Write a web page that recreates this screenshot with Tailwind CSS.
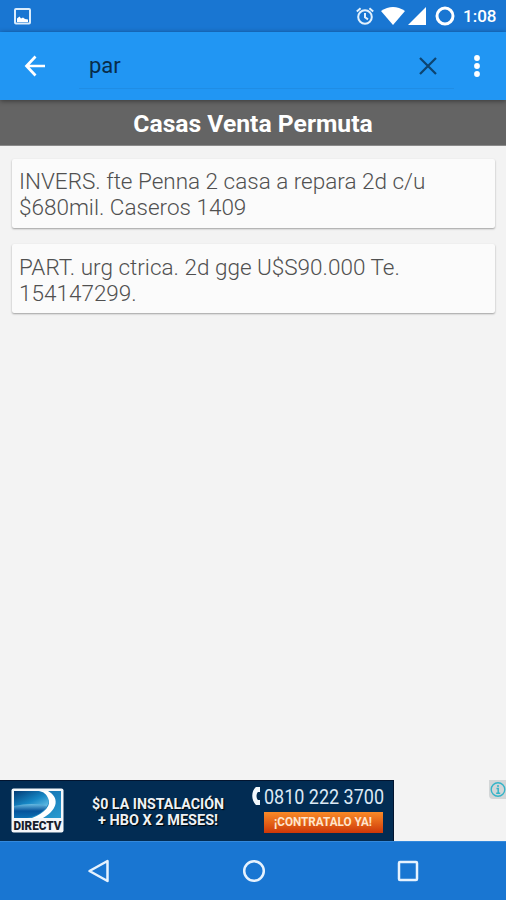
<!DOCTYPE html>
<html lang="es">
<head>
<meta charset="utf-8">
<title>Casas Venta Permuta</title>
<script src="https://cdn.jsdelivr.net/npm/@tailwindcss/browser@4"></script>
</head>
<body class="w-[506px] h-[900px] overflow-hidden bg-[#f3f3f3] font-['Roboto',sans-serif]">
<div class="flex flex-col h-[900px]">
  <!-- Status bar -->
  <div class="h-8 shrink-0 bg-[#1976d2] flex items-center justify-between pl-[14px] pr-[9px] text-white">
    <svg class="w-[17px] h-[17px]" viewBox="0 0 17 17"><rect x="1" y="1" width="15" height="14.500" rx="1" fill="none" stroke="#d9ecfc" stroke-width="2"/><path d="M3 14V10.500l2.500-2 1.500 2 2-1 2 1.500 3 .5V14z" fill="#fff"/></svg>
    <div class="flex items-center">
      <svg class="w-[18px] h-[18px]" viewBox="0 0 18 18" fill="none" stroke="#e3f1fd" stroke-width="2"><circle cx="9" cy="10" r="6.800"/><path d="M9 6v4.300l3 2M.8 4.500 4.600 1.300M17.200 4.500 13.400 1.300" stroke-width="2"/></svg>
      <svg class="w-6 h-[18px] ml-[7px]" viewBox="0 0 24 18"><path d="M0 4Q12-4 24 4L12 18z" fill="#fff"/></svg>
      <svg class="w-[18px] h-[18px] ml-[3px]" viewBox="0 0 18 18"><path d="M18 0V18H0z" fill="#fff"/></svg>
      <svg class="w-5 h-5 ml-[9px]" viewBox="0 0 20 20"><circle cx="10" cy="10" r="8" fill="none" stroke="#fff" stroke-width="3"/></svg>
      <span class="ml-[8px] w-[34px] text-[17px] font-medium leading-8 whitespace-nowrap">1:08</span>
    </div>
  </div>
  <!-- Search toolbar -->
  <div class="h-[68px] shrink-0 bg-[#2196f3] flex items-center relative z-10 shadow-[0_1px_5px_rgba(0,0,0,0.45)]">
    <svg class="w-[22px] h-[22px] ml-6" viewBox="0 0 22 22" fill="none" stroke="#fff" stroke-width="2.700"><path d="M21 11H3M11.500 1.500 2.500 11l9 9.500"/></svg>
    <div class="ml-[33px] w-[375px] h-[54px] mt-[-8px] flex items-center justify-between pl-[10px] pr-[17px] pt-[8px] border-b border-[#1f8de5]">
      <span class="text-[22px] leading-[28px] text-[#082c49]">par</span>
      <svg class="w-[18px] h-[18px]" viewBox="0 0 18 18" fill="none" stroke="#0d4470" stroke-width="2.200"><path d="m1 1 16 16M17 1 1 17"/></svg>
    </div>
    <svg class="w-[6px] h-[22px] ml-5" viewBox="0 0 6 22" fill="#fff"><circle cx="3" cy="3" r="2.900"/><circle cx="3" cy="11" r="2.900"/><circle cx="3" cy="19" r="2.900"/></svg>
  </div>
  <!-- Section title -->
  <h1 class="h-[46px] shrink-0 bg-[#646464] border-b border-[#8a8a8a] text-white font-bold text-[24.700px] leading-[48px] text-center">Casas Venta Permuta</h1>
  <!-- Listings -->
  <main class="flex-1 flex flex-col gap-4 pt-[13px] pl-3 pr-[11px] text-[22.500px] leading-[26px] text-[#505050] font-light">
    <div class="h-[69px] bg-[#fbfbfb] pl-[7px] pt-[9px] rounded-[2px] shadow-[0_1px_2px_rgba(0,0,0,0.35)]">INVERS. fte Penna 2 casa a repara 2d c/u<br>$680mil. Caseros 1409</div>
    <div class="h-[69px] bg-[#fbfbfb] pl-[7px] pt-[10px] rounded-[2px] shadow-[0_1px_2px_rgba(0,0,0,0.35)]">PART. urg ctrica. 2d gge U$S90.000 Te.<br>154147299.</div>
  </main>
  <!-- Ad banner -->
  <div class="h-[61px] shrink-0 flex justify-between items-start">
    <div class="w-[394px] h-[61px] bg-[#022c53] border-t border-r border-[#02142f] flex">
      <svg class="w-[54px] h-[45px] ml-[11px] mt-[7px]" viewBox="0 0 54 45">
        <defs>
          <linearGradient id="sky" x1="0" y1="0" x2=".6" y2="1"><stop offset="0" stop-color="#033b75"/><stop offset=".5" stop-color="#1687c5"/><stop offset="1" stop-color="#8ddaf5"/></linearGradient>
          <linearGradient id="deep" x1="0" y1="0" x2="0" y2="1"><stop offset="0" stop-color="#6abce2"/><stop offset=".5" stop-color="#06539b"/><stop offset="1" stop-color="#0b6eb2"/></linearGradient>
          <linearGradient id="edge" x1="0" y1="0" x2="1" y2="1"><stop offset="0" stop-color="#0a62a6"/><stop offset="1" stop-color="#2a9bd0"/></linearGradient>
        </defs>
        <rect x=".5" y=".5" width="52" height="44" rx="2" fill="#f4f7fa"/>
        <path d="M3 3H50V30H3z" fill="url(#edge)"/>
        <path d="M3 3H25C36 4 41 12 36 18 30 26 17 29 3 30z" fill="url(#sky)"/>
        <path d="M3 18Q22 14 36 18 31 27 16 30H3z" fill="url(#deep)"/>
        <path d="M28 3H37C48 9 48 21 32 30H21C34 25 41 17 37 10 35 6 33 4 28 3z" fill="#fff"/>
        <text x="2.500" y="42" textLength="48" lengthAdjust="spacingAndGlyphs" font-family="Roboto, sans-serif" font-size="12" font-weight="900" fill="#17202c">DIRECTV</text>
      </svg>
      <div class="w-[140px] ml-[23px] pt-[15px] text-[#edf1f5]">
        <svg class="block w-[140px] h-[15px] overflow-visible" viewBox="0 0 140 15" font-family="Roboto, sans-serif" font-weight="bold" font-size="14" fill="currentColor"><text x="4" y="13" textLength="132" lengthAdjust="spacingAndGlyphs" class="[text-shadow:1px_1px_1px_#000]">$0 LA INSTALACIÓN</text></svg>
        <svg class="block w-[140px] h-[15px] overflow-visible" viewBox="0 0 140 15" font-family="Roboto, sans-serif" font-weight="bold" font-size="14" fill="currentColor"><text x="10" y="13.500" textLength="120" lengthAdjust="spacingAndGlyphs" class="[text-shadow:1px_1px_1px_#000]">+ HBO X 2 MESES!</text></svg>
      </div>
      <div class="flex flex-col ml-[22px] mt-[4px] w-[136px]">
        <svg class="w-[136px] h-[24px] overflow-visible" viewBox="0 0 136 24">
          <path d="M10 2H6C1 6 1 15 6 20H10V15H8C6 13 6 9 8 7H10z" fill="#f2f8fd"/>
          <text x="14" y="18.500" textLength="120" lengthAdjust="spacingAndGlyphs" font-family="Roboto, sans-serif" font-size="20" fill="#dce9f5">0810 222 3700</text>
        </svg>
        <div class="ml-[14px] mt-[3px] w-[119px] h-[21px] bg-linear-to-b from-[#fa8a27] to-[#cd3608]">
          <svg class="w-[119px] h-[21px] overflow-visible" viewBox="0 0 119 21"><text x="10" y="14" textLength="98" lengthAdjust="spacingAndGlyphs" font-family="Roboto, sans-serif" font-weight="bold" font-size="13" fill="#ffe5cc">¡CONTRATALO YA!</text></svg>
        </div>
      </div>
    </div>
    <svg class="w-[17px] h-[19px]" viewBox="0 0 17 19"><path d="M0 0H17V19H4Q0 19 0 15z" fill="#d3d6d7"/><circle cx="9" cy="9.500" r="6.800" fill="none" stroke="#35b4c8" stroke-width="1.400"/><path d="M9 5v2M7.500 8.500H9.200V13M7.200 13.300h4" fill="none" stroke="#35b4c8" stroke-width="1.500"/></svg>
  </div>
  <!-- Navigation bar -->
  <div class="h-[59px] shrink-0 bg-[#1976d2] border-t border-[#3389dd] flex items-center justify-between pl-[87px] pr-[86px]">
    <svg class="w-6 h-6" viewBox="0 0 24 24" fill="none" stroke="#e6f2fe" stroke-width="2.500" stroke-linejoin="round"><path d="M20.500 2V22L2.500 12z"/></svg>
    <svg class="w-6 h-6" viewBox="0 0 24 24" fill="none" stroke="#e6f2fe" stroke-width="2.500"><circle cx="12" cy="12" r="9.800"/></svg>
    <svg class="w-6 h-6" viewBox="0 0 24 24" fill="none" stroke="#e6f2fe" stroke-width="2.500"><rect x="3" y="3" width="18" height="18" rx="1"/></svg>
  </div>
</div>
</body>
</html>
